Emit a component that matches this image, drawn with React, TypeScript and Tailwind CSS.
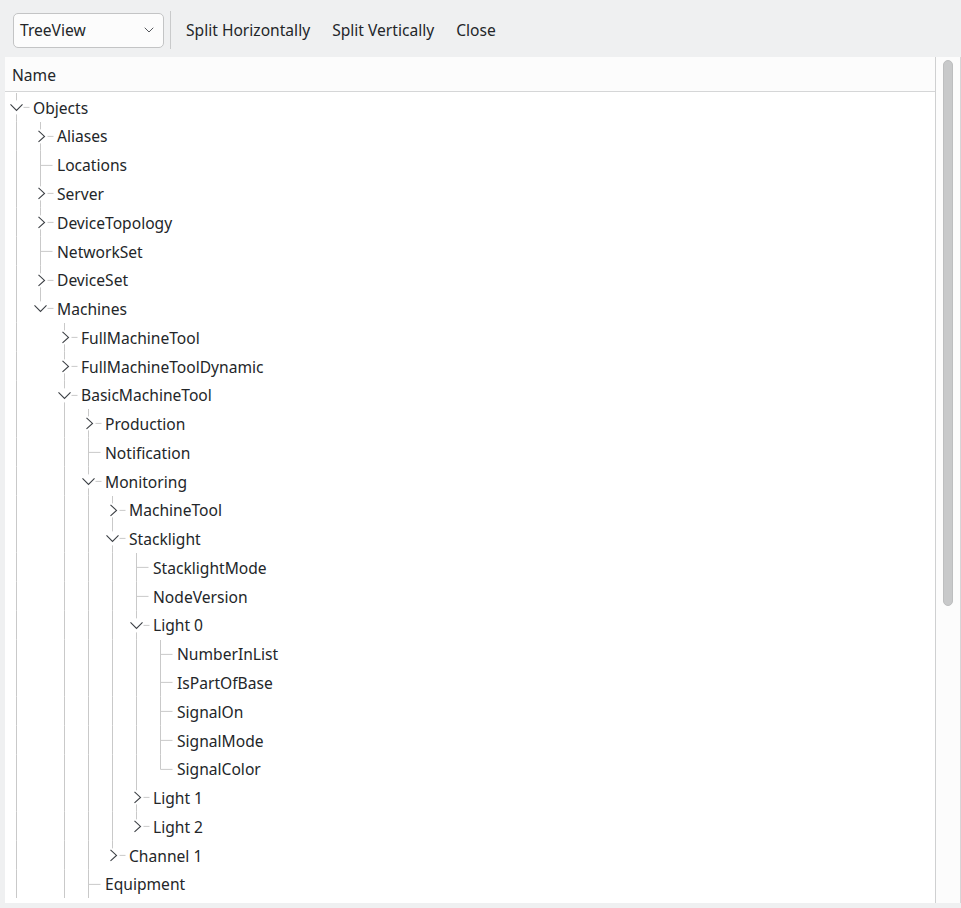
import { ChevronDown } from "lucide-react";

type Node = { label: string; level: number; kind: "open" | "closed" | "leaf"; last?: boolean };

const rows: Node[] = [
    { label: "Objects", level: 0, kind: "open" },
    { label: "Aliases", level: 1, kind: "closed" },
    { label: "Locations", level: 1, kind: "leaf" },
    { label: "Server", level: 1, kind: "closed" },
    { label: "DeviceTopology", level: 1, kind: "closed" },
    { label: "NetworkSet", level: 1, kind: "leaf" },
    { label: "DeviceSet", level: 1, kind: "closed" },
    { label: "Machines", level: 1, kind: "open", last: true },
    { label: "FullMachineTool", level: 2, kind: "closed" },
    { label: "FullMachineToolDynamic", level: 2, kind: "closed" },
    { label: "BasicMachineTool", level: 2, kind: "open" },
    { label: "Production", level: 3, kind: "closed" },
    { label: "Notification", level: 3, kind: "leaf" },
    { label: "Monitoring", level: 3, kind: "open" },
    { label: "MachineTool", level: 4, kind: "closed" },
    { label: "Stacklight", level: 4, kind: "open" },
    { label: "StacklightMode", level: 5, kind: "leaf" },
    { label: "NodeVersion", level: 5, kind: "leaf" },
    { label: "Light 0", level: 5, kind: "open" },
    { label: "NumberInList", level: 6, kind: "leaf" },
    { label: "IsPartOfBase", level: 6, kind: "leaf" },
    { label: "SignalOn", level: 6, kind: "leaf" },
    { label: "SignalMode", level: 6, kind: "leaf" },
    { label: "SignalColor", level: 6, kind: "leaf", last: true },
    { label: "Light 1", level: 5, kind: "closed" },
    { label: "Light 2", level: 5, kind: "closed", last: true },
    { label: "Channel 1", level: 4, kind: "closed", last: true },
    { label: "Equipment", level: 3, kind: "leaf" },
];

const ROW_H = 28.78;
const LINE = "#c9c9c9";

// for each row, which ancestor levels still have siblings coming below
function guides(index: number): boolean[] {
    const level = rows[index].level;
    const out: boolean[] = [];
    let want = level - 1;
    for (let i = index - 1; i >= 0 && want >= 0; i--) {
        if (rows[i].level === want) {
            out[want] = !rows[i].last;
            want--;
        }
    }
    return out;
}

function Branch({ node, index }: { node: Node; index: number }) {
    const g = guides(index);
    const cx = 11.5 + node.level * 24;
    const cy = ROW_H / 2;
    const w = 28 + node.level * 24;
    return (
        <svg width={w} height={ROW_H} className="shrink-0">
            {g.map((on, lvl) =>
                on ? <line key={lvl} x1={11.5 + lvl * 24} y1={0} x2={11.5 + lvl * 24} y2={ROW_H} stroke={LINE} strokeWidth={1} /> : null
            )}
            {node.kind === "leaf" ? (
                <>
                    <line x1={cx} y1={0} x2={cx} y2={node.last ? cy : ROW_H} stroke={LINE} strokeWidth={1} />
                    <line x1={cx} y1={cy} x2={cx + 12} y2={cy} stroke={LINE} strokeWidth={1} />
                </>
            ) : (
                <>
                    <line x1={cx} y1={0} x2={cx} y2={cy - 7} stroke={LINE} strokeWidth={1} />
                    {!node.last && <line x1={cx} y1={cy + 7} x2={cx} y2={ROW_H} stroke={LINE} strokeWidth={1} />}
                    <line x1={cx + 7} y1={cy} x2={cx + 13} y2={cy} stroke={LINE} strokeWidth={1} />
                    {node.kind === "closed" ? (
                        <polyline points={`${cx - 2},${cy - 5.5} ${cx + 4},${cy} ${cx - 2},${cy + 5.5}`} fill="none" stroke="#3b3f44" strokeWidth={1.1} />
                    ) : (
                        <polyline points={`${cx - 6},${cy - 3} ${cx},${cy + 3} ${cx + 6},${cy - 3}`} fill="none" stroke="#3b3f44" strokeWidth={1.1} />
                    )}
                </>
            )}
        </svg>
    );
}

export default function App() {
    return (
        <div className="w-[961px] h-[908px] bg-[#eff0f1] flex flex-col text-[15.6px] text-[#232629] overflow-hidden" style={{ fontFamily: '"Noto Sans", "Open Sans", sans-serif' }}>
            {/* toolbar */}
            <div className="h-[57px] shrink-0 flex items-center pl-[13px] pt-[3px]">
                <div className="w-[151px] h-[35px] rounded-[5px] border border-[#c3c4c5] bg-[#fcfcfc] flex items-center justify-between pl-[6px] pr-[6px]">
                    <span className="pt-[2px]">TreeView</span>
                    <ChevronDown size={16} strokeWidth={1.3} className="text-[#3b3f44]" />
                </div>
                <div className="w-px h-[38px] bg-[#c9cacb] ml-[6px] mr-[15px]" />
                <div className="flex gap-[22px] pt-[2px]">
                    <span>Split Horizontally</span>
                    <span>Split Vertically</span>
                    <span>Close</span>
                </div>
            </div>

            {/* tree panel */}
            <div className="h-[846px] shrink-0 ml-[5px] flex bg-white">
                <div className="w-[930px] flex flex-col overflow-hidden">
                    <div className="h-[35px] shrink-0 bg-[#fcfcfc] border-b border-[#d5d6d7] flex items-center pl-[7px] pt-[3px]">
                        Name
                    </div>
                    <div className="pt-px">
                        {rows.map((node, i) => (
                            <div key={i} className="flex items-center h-[28.78px] whitespace-nowrap">
                                <Branch node={node} index={i} />
                                <span className="pt-[2px]">{node.label}</span>
                            </div>
                        ))}
                    </div>
                </div>
                <div className="w-px bg-[#cfd0d1]" />
                <div className="w-[24px] bg-[#fcfcfc] pt-[3px] pl-[7px]">
                    <div className="w-[10px] h-[546px] rounded-full bg-[#c8c9ca] border border-[#bdbebf]" />
                </div>
                <div className="w-px bg-[#d5d6d7]" />
            </div>
        </div>
    );
}
